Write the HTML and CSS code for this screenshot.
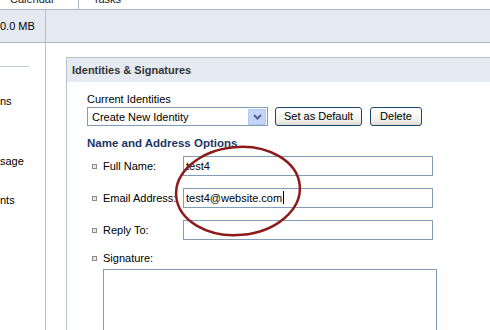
FILE: index.html
```html
<!DOCTYPE html>
<html lang="en">

<head>
    <meta charset="UTF-8">
    <meta name="viewport" content="width=device-width, initial-scale=1.0">
    <title>Identities &amp; Signatures</title>
    <link rel="stylesheet" href="styles.css">
</head>

<body>
    <div class="tabs">
        <div class="tab tab-calendar">Calendar</div>
        <div class="tab">Tasks</div>
    </div>

    <div class="quota">
        <div class="quota-cell">0.0 MB</div>
    </div>

    <div class="main">
        <div class="sidebar">
            <div class="side-rule"></div>
            <div class="side-item first">ns</div>
            <div class="side-item second">sage</div>
            <div class="side-item third">nts</div>
        </div>

        <div class="content">
            <div class="panel">
                <div class="panel-head">Identities &amp; Signatures</div>
                <div class="panel-body">
                    <div class="label">Current Identities</div>
                    <div class="identity-row">
                        <div class="combo">
                            <span>Create New Identity</span>
                            <span class="combo-arrow">
                                <svg width="9" height="6" viewBox="0 0 9 6">
                                    <path d="M1 1 L4.5 4.5 L8 1" fill="none" stroke="#4d6185" stroke-width="2"/>
                                </svg>
                            </span>
                        </div>
                        <div class="btn">Set as Default</div>
                        <div class="btn btn-delete">Delete</div>
                    </div>

                    <h2 class="section-title">Name and Address Options</h2>

                    <div class="form-row">
                        <div class="row-label"><span class="bullet"></span>Full Name:</div>
                        <div class="field">test4</div>
                    </div>
                    <div class="form-row">
                        <div class="row-label"><span class="bullet"></span>Email Address:</div>
                        <div class="field">test4@website.com<span class="caret"></span></div>
                    </div>
                    <div class="form-row">
                        <div class="row-label"><span class="bullet"></span>Reply To:</div>
                        <div class="field"></div>
                    </div>

                    <div class="sig-label"><span class="bullet"></span>Signature:</div>
                    <div class="signature"></div>
                </div>
            </div>
        </div>
    </div>

    <!-- hand drawn highlight over the form -->
    <svg class="highlight" width="490" height="330" viewBox="0 0 490 330">
        <ellipse cx="238" cy="191" rx="62" ry="44" transform="rotate(-5 238 191)"
            fill="none" stroke="#8c1c1c" stroke-width="2.5"/>
    </svg>
</body>

</html>
```

FILE: styles.css
```css
body {
    font-family: 'Liberation Sans', Arial, sans-serif;
    font-size: 11px;
    color: #000;
    background-color: #fff;
    margin: 0;
    width: 490px;
    height: 330px;
    overflow: hidden;
    position: relative;
}

.tabs {
    display: flex;
    height: 9px;
    overflow: hidden;
    border-bottom: 1px solid #a9b7c5;
}

.tab {
    line-height: 13px;
    margin-top: -7px;
    padding-left: 14px;
    color: #222;
}

.tab-calendar {
    padding-left: 10px;
    width: 68px;
    border-right: 1px solid #a9b7c5;
}

.quota {
    display: flex;
    height: 32px;
    background-color: #e5eaf2;
    border-bottom: 1px solid #a9b7c5;
}

.quota-cell {
    width: 45px;
    line-height: 32px;
    border-right: 1px solid #b4c0cd;
}

.main {
    display: flex;
    height: 287px;
}

.sidebar {
    width: 45px;
    border-right: 1px solid #b4c0cd;
    overflow: hidden;
}

.side-rule {
    width: 29px;
    margin-top: 23px;
    border-top: 1px solid #c3ccd6;
}

.side-item {
    line-height: 13px;
}

.side-item.first {
    margin-top: 28px;
}

.side-item.second {
    margin-top: 47px;
}

.side-item.third {
    margin-top: 26px;
}

.content {
    flex: 1;
    padding: 14px 0 0 20px;
    overflow: hidden;
}

.panel {
    height: 100%;
    border-top: 1px solid #b8c4d0;
    border-left: 1px solid #b8c4d0;
}

.panel-head {
    height: 24px;
    line-height: 24px;
    padding-left: 5px;
    background-color: #e5eaf2;
    font-weight: bold;
    color: #333;
}

.panel-body {
    padding: 11px 0 0 20px;
}

.label {
    line-height: 13px;
}

.identity-row {
    display: flex;
    align-items: center;
    margin-top: 1px;
}

.combo {
    display: flex;
    align-items: center;
    justify-content: space-between;
    width: 175px;
    height: 17px;
    border: 1px solid #7f9db9;
    padding-left: 4px;
}

.combo-arrow {
    display: flex;
    align-items: center;
    justify-content: center;
    width: 16px;
    height: 14px;
    margin-right: 1px;
    background-color: #c5d4f8;
    border: 1px solid #b4c8f2;
    border-radius: 1px;
}

.btn {
    height: 17px;
    line-height: 17px;
    padding: 0 8px;
    margin-left: 7px;
    border: 1px solid #1f4470;
    border-radius: 3px;
    background: linear-gradient(#ffffff, #f1f1ec 70%, #dedbd0);
}

.btn-delete {
    margin-left: 8px;
    padding: 0 9px;
}

.section-title {
    margin: 10px 0 6px;
    font-size: 11.5px;
    line-height: 14px;
    color: #1b3866;
}

.form-row {
    display: flex;
    align-items: center;
    height: 20px;
    margin-bottom: 12px;
}

.row-label,
.sig-label {
    display: flex;
    align-items: center;
    padding-left: 5px;
}

.row-label {
    width: 91px;
}

.bullet {
    width: 3px;
    height: 3px;
    margin-right: 6px;
    border: 1px solid #8a8a8a;
    background-color: #e8e8e8;
}

.field {
    width: 246px;
    height: 18px;
    line-height: 18px;
    padding-left: 2px;
    border: 1px solid #7f9db9;
}

.caret {
    display: inline-block;
    width: 1px;
    height: 13px;
    margin-left: 1px;
    vertical-align: -2px;
    background-color: #000;
}

.sig-label {
    line-height: 13px;
    margin-top: 1px;
}

.signature {
    width: 332px;
    height: 80px;
    margin: 4px 0 0 16px;
    border: 1px solid #7f9db9;
}

.highlight {
    position: absolute;
    top: 0;
    left: 0;
    pointer-events: none;
}
```
